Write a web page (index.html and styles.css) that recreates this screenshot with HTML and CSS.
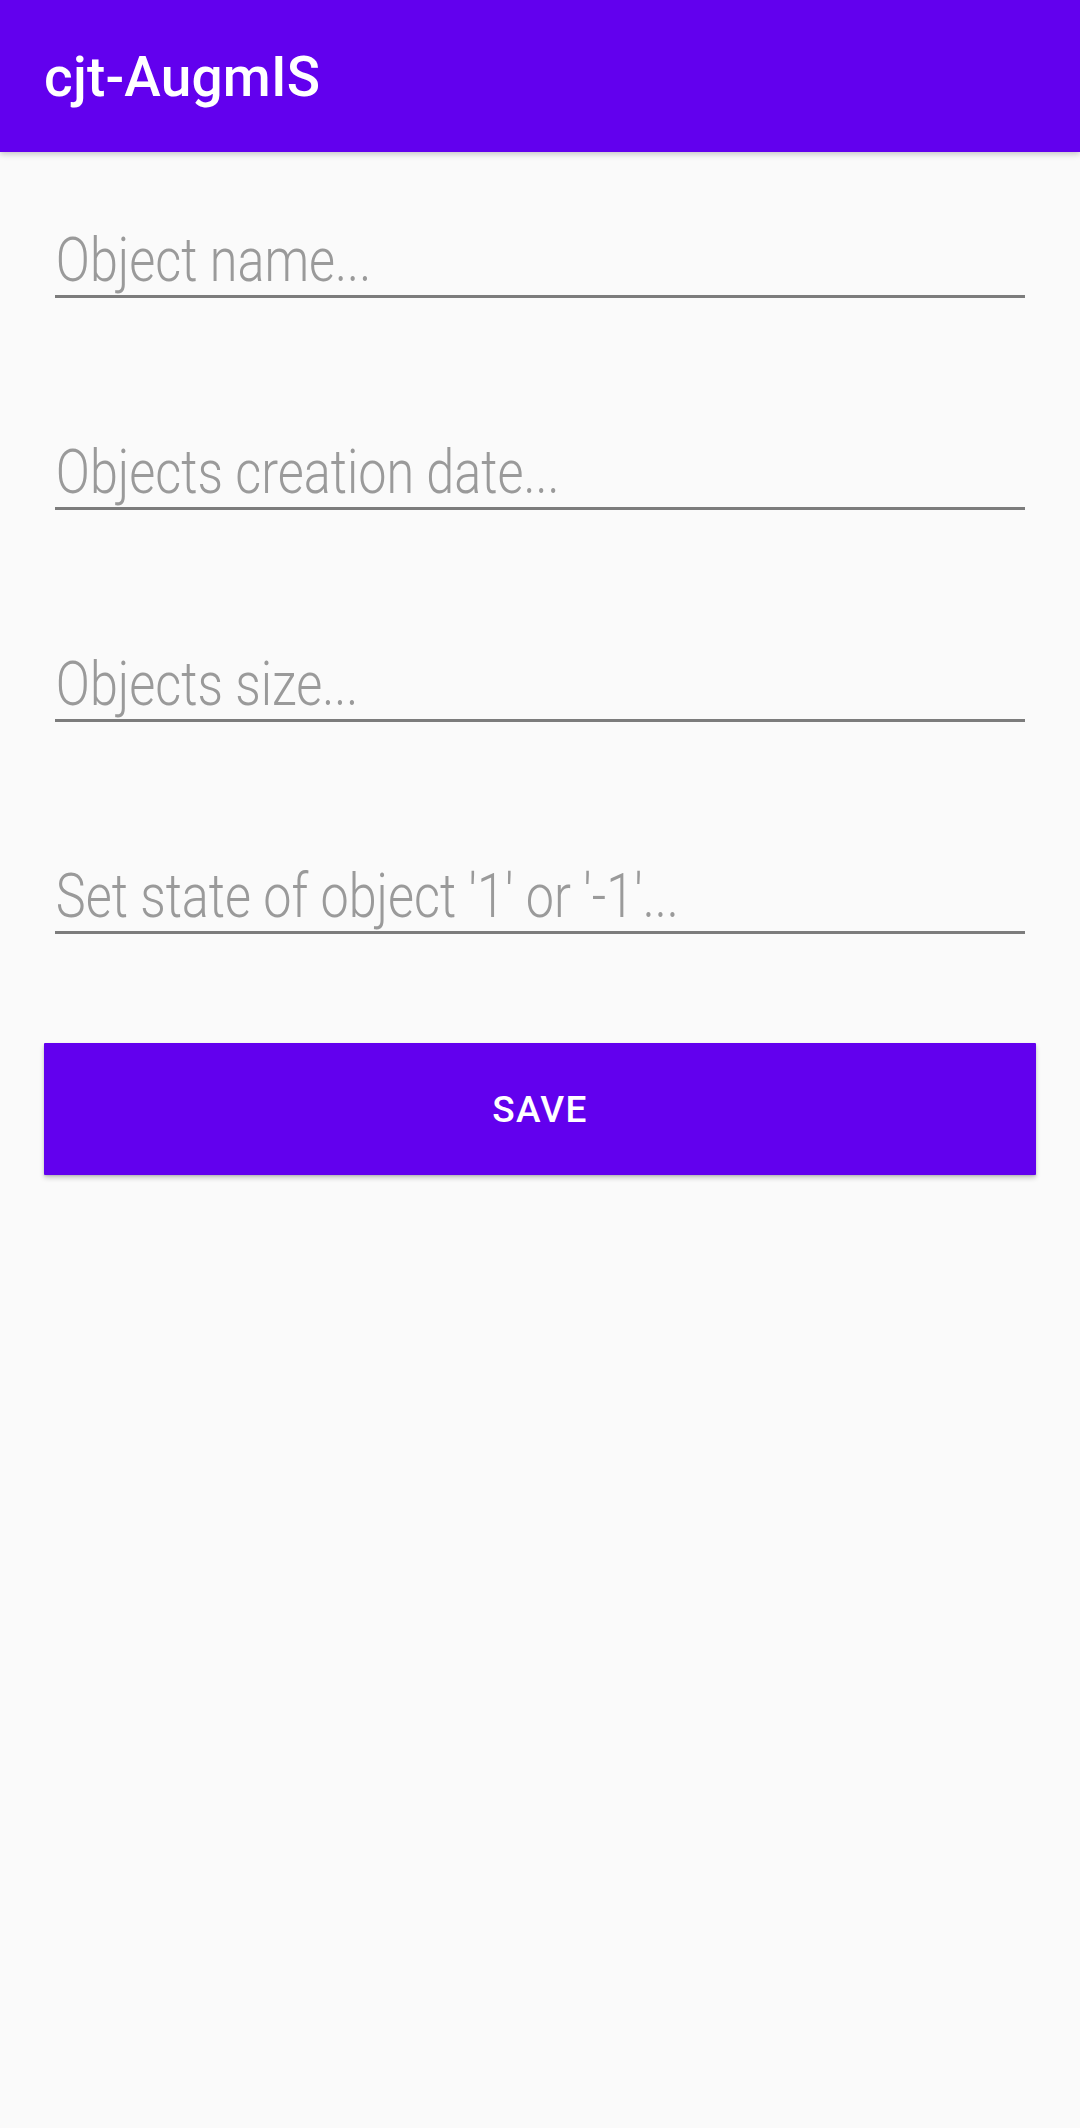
FILE: index.html
```html
<!DOCTYPE html>
<html lang="en">
<head>
<meta charset="utf-8">
<title>cjt-AugmIS</title>
<link rel="stylesheet" href="styles.css">
</head>
<body>
<header class="app-bar">
  <h1 class="app-title">cjt-AugmIS</h1>
</header>
<main class="form">
  <div class="field"><span class="hint">Object name...</span></div>
  <div class="field"><span class="hint">Objects creation date...</span></div>
  <div class="field"><span class="hint">Objects size...</span></div>
  <div class="field"><span class="hint">Set state of object '1' or '-1'...</span></div>
  <button class="save-btn" type="button">SAVE</button>
</main>
</body>
</html>
```

FILE: styles.css
```css
html, body {
  margin: 0;
  padding: 0;
}
body {
  width: 1080px;
  height: 2128px;
  background: #fafafa;
  font-family: Roboto, "Liberation Sans", sans-serif;
  overflow: hidden;
}
.app-bar {
  position: relative;
  z-index: 2;
  height: 152px;
  background: #6200ee;
  display: flex;
  align-items: center;
  padding: 2px 0 0 44px;
  box-sizing: border-box;
  box-shadow: 0 2px 6px rgba(0, 0, 0, 0.22);
}
.app-title {
  margin: 0;
  color: #ffffff;
  font-size: 55px;
  font-weight: 500;
  line-height: 64px;
  letter-spacing: 0.2px;
}
.form {
  display: flex;
  flex-direction: column;
  padding: 79px 0 0 0;
}
.field {
  margin: 0 55px 145px 55px;
  height: 64px;
  line-height: 58px;
  font-size: 61px;
  font-weight: 300;
  color: #9a9a9a;
  border-bottom: 3px solid #7c7c7c;
  white-space: nowrap;
}
.hint {
  display: inline-block;
  transform: scaleX(0.825);
  transform-origin: left center;
  padding-left: 1px;
}
.field:nth-child(4) {
  margin-bottom: 109px;
}
.save-btn {
  margin: 0 44px 0 44px;
  height: 132px;
  border: none;
  border-radius: 1px;
  background: #6200ee;
  color: #ffffff;
  font-family: Roboto, "Liberation Sans", sans-serif;
  font-size: 37px;
  font-weight: 500;
  letter-spacing: 1.3px;
  box-shadow: 0 3px 5px rgba(0, 0, 0, 0.2), 0 1px 2px rgba(0, 0, 0, 0.12);
  padding: 0;
}
```
